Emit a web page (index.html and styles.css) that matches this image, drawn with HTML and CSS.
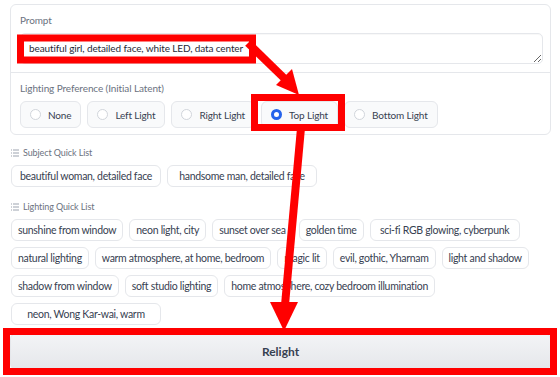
FILE: index.html
```html
<!DOCTYPE html>
<html lang="en">

<head>
    <meta charset="UTF-8">
    <title>Relight</title>
    <link rel="stylesheet" href="styles.css">
</head>

<body>
    <div class="page">
        <!-- Prompt + lighting preference -->
        <div class="panel">
            <div class="field">
                <span class="label">Prompt</span>
                <textarea class="prompt" rows="1">beautiful girl, detailed face, white LED, data center</textarea>
            </div>
            <div class="field field-radio">
                <span class="label">Lighting Preference (Initial Latent)</span>
                <div class="radios">
                    <label class="radio"><span class="dot"></span>None</label>
                    <label class="radio"><span class="dot"></span>Left Light</label>
                    <label class="radio"><span class="dot"></span>Right Light</label>
                    <label class="radio selected"><span class="dot"></span>Top Light</label>
                    <label class="radio"><span class="dot"></span>Bottom Light</label>
                </div>
            </div>
        </div>

        <!-- Subject quick list -->
        <div class="dataset">
            <div class="ds-label">
                <svg class="list-icon" width="8" height="8" viewBox="0 0 8 8"><path d="M0 1h1M2 1h6M0 4h1M2 4h6M0 7h1M2 7h6" stroke="#9ca3af" stroke-width="1"/></svg>
                Subject Quick List
            </div>
            <div class="chip-row">
                <span class="chip chip-wide">beautiful woman, detailed face</span>
                <span class="chip chip-wide">handsome man, detailed face</span>
            </div>
        </div>

        <!-- Lighting quick list -->
        <div class="dataset">
            <div class="ds-label">
                <svg class="list-icon" width="8" height="8" viewBox="0 0 8 8"><path d="M0 1h1M2 1h6M0 4h1M2 4h6M0 7h1M2 7h6" stroke="#9ca3af" stroke-width="1"/></svg>
                Lighting Quick List
            </div>
            <div class="chip-rows">
                <div class="chip-row">
                    <span class="chip">sunshine from window</span>
                    <span class="chip">neon light, city</span>
                    <span class="chip">sunset over sea</span>
                    <span class="chip">golden time</span>
                    <span class="chip chip-wide">sci-fi RGB glowing, cyberpunk</span>
                </div>
                <div class="chip-row">
                    <span class="chip">natural lighting</span>
                    <span class="chip">warm atmosphere, at home, bedroom</span>
                    <span class="chip">magic lit</span>
                    <span class="chip">evil, gothic, Yharnam</span>
                    <span class="chip">light and shadow</span>
                </div>
                <div class="chip-row">
                    <span class="chip">shadow from window</span>
                    <span class="chip">soft studio lighting</span>
                    <span class="chip">home atmosphere, cozy bedroom illumination</span>
                </div>
                <div class="chip-row">
                    <span class="chip chip-wide">neon, Wong Kar-wai, warm</span>
                </div>
            </div>
        </div>

        <button class="relight">Relight</button>

        <!-- red annotation marks drawn over the page -->
        <svg class="marks" width="560" height="377" viewBox="0 0 560 377">
            <g fill="none" stroke="#ff0000" stroke-width="7">
                <rect x="20.5" y="38" width="232" height="22"/>
                <rect x="254.5" y="97.5" width="87" height="30"/>
                <rect x="6.5" y="331.5" width="547" height="40"/>
            </g>
            <g stroke="#ff0000" stroke-width="8" fill="#ff0000">
                <line x1="248" y1="43" x2="286" y2="80"/>
                <polygon points="276,85 292,69 299,95" stroke="none"/>
                <line x1="301" y1="128" x2="285" y2="305"/>
                <polygon points="270,302 298,302 284,331" stroke="none"/>
            </g>
        </svg>
    </div>
</body>

</html>
```

FILE: styles.css
```css
/* Global styles */
body {
    margin: 0;
    background: #ffffff;
    font-family: 'Lato', 'Liberation Sans', sans-serif;
    color: #374151;
}

.page {
    position: relative;
    width: 560px;
    height: 377px;
    box-sizing: border-box;
    padding: 4px 9px 0 10px;
    overflow: hidden;
}

.panel {
    border: 1px solid #e5e7eb;
    border-radius: 6px;
    background: #ffffff;
}

.field {
    display: flex;
    flex-direction: column;
    gap: 6px;
    padding: 8px 7px 8px 9px;
}

.field-radio {
    border-top: 1px solid #e5e7eb;
    padding-top: 8px;
    padding-bottom: 6px;
}

.label {
    font-size: 10px;
    letter-spacing: -0.1px;
    line-height: 14px;
    color: #6b7280;
}

.prompt {
    height: 31px;
    box-sizing: border-box;
    padding: 7px 8px;
    border: 1px solid #e5e7eb;
    border-radius: 5px;
    font-family: inherit;
    font-size: 10px;
    letter-spacing: -0.12px;
    line-height: 15px;
    color: #1f2937;
    resize: vertical;
    overflow: hidden;
    box-shadow: inset 0 1px 1px rgba(0, 0, 0, 0.03);
}

.radios {
    display: flex;
    gap: 6px;
}

.radio {
    display: flex;
    align-items: center;
    gap: 7px;
    height: 27px;
    box-sizing: border-box;
    padding: 0 9px 0 9px;
    border: 1px solid #e5e7eb;
    border-radius: 6px;
    background: #f9fafb;
    font-size: 10px;
    letter-spacing: -0.15px;
    color: #374151;
}

.dot {
    width: 9px;
    height: 9px;
    border: 1px solid #d1d5db;
    border-radius: 50%;
    background: #ffffff;
}

.selected .dot {
    border: 3px solid #2563eb;
    width: 5px;
    height: 5px;
}

.dataset {
    margin-top: 12px;
    margin-left: 1px;
}

.dataset + .dataset {
    margin-top: 14px;
}

.ds-label {
    display: flex;
    align-items: center;
    gap: 4px;
    font-size: 9px;
    letter-spacing: -0.1px;
    line-height: 12px;
    color: #6b7280;
    margin-bottom: 6px;
}

.chip-rows {
    display: flex;
    flex-direction: column;
    gap: 6px;
}

.chip-row {
    display: flex;
    gap: 6px;
}

.chip {
    display: flex;
    align-items: center;
    justify-content: center;
    height: 22px;
    box-sizing: border-box;
    padding: 0 6px;
    border: 1px solid #e5e7eb;
    border-radius: 6px;
    background: #ffffff;
    font-size: 10.5px;
    letter-spacing: -0.3px;
    white-space: nowrap;
    color: #374151;
}

.chip-wide {
    width: 150px;
}

.relight {
    display: block;
    width: 100%;
    height: 37px;
    margin-top: 8px;
    border: 1px solid #e5e7eb;
    border-radius: 6px;
    background: linear-gradient(to bottom, #f3f4f6, #e5e7eb);
    font-family: inherit;
    font-size: 12px;
    font-weight: bold;
    color: #374151;
}

.marks {
    position: absolute;
    top: 0;
    left: 0;
    pointer-events: none;
}
```
